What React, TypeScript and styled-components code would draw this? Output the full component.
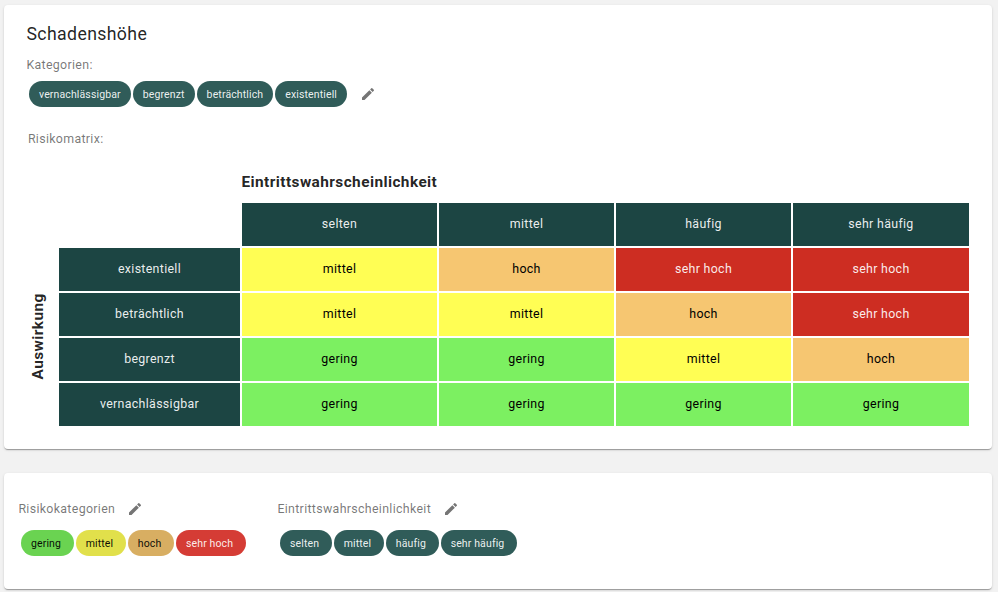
import React from "react";
import styled, { createGlobalStyle } from "styled-components";

const GlobalStyle = createGlobalStyle`
  * { box-sizing: border-box; }
  body {
    margin: 0;
    background: #f2f2f2;
    color: rgba(0, 0, 0, 0.87);
    font-family: Roboto, "Liberation Sans", sans-serif;
  }
`;

type Level = "gering" | "mittel" | "hoch" | "sehr hoch";

const cellColors: Record<Level, string> = {
  gering: "#7cf061",
  mittel: "#fffe54",
  hoch: "#f6c671",
  "sehr hoch": "#cd2d22",
};

const chipColors: Record<Level, string> = {
  gering: "#6ad351",
  mittel: "#e1e04b",
  hoch: "#d8ae62",
  "sehr hoch": "#d53c35",
};

const impacts = ["vernachlässigbar", "begrenzt", "beträchtlich", "existentiell"];
const likelihoods = ["selten", "mittel", "häufig", "sehr häufig"];
const levels: Level[] = ["gering", "mittel", "hoch", "sehr hoch"];

const matrix: { impact: string; risks: Level[] }[] = [
  { impact: "existentiell", risks: ["mittel", "hoch", "sehr hoch", "sehr hoch"] },
  { impact: "beträchtlich", risks: ["mittel", "mittel", "hoch", "sehr hoch"] },
  { impact: "begrenzt", risks: ["gering", "gering", "mittel", "hoch"] },
  { impact: "vernachlässigbar", risks: ["gering", "gering", "gering", "gering"] },
];

const Page = styled.main`
  display: flex;
  flex-direction: column;
  gap: 24px;
  width: 998px;
  height: 592px;
  padding: 5px 6px 0 4px;
  overflow: hidden;
`;

const Card = styled.section`
  border-radius: 4px;
  background: #fff;
  box-shadow: 0 2px 1px -1px rgba(0, 0, 0, 0.2), 0 1px 1px 0 rgba(0, 0, 0, 0.14),
    0 1px 3px 0 rgba(0, 0, 0, 0.12);
`;

const DamageCard = styled(Card)`
  height: 444px;
  padding: 18px 23px 0 22px;
`;

const SettingsCard = styled(Card)`
  display: flex;
  height: 116px;
  padding: 26px 14px 0;
`;

const Title = styled.h1`
  margin: 0 0 10px;
  padding-left: 0.5px;
  font-size: 17.7px;
  font-weight: 400;
  line-height: 22px;
  letter-spacing: 0.36px;
`;

const Label = styled.div`
  padding-left: 0.4px;
  color: rgba(0, 0, 0, 0.54);
  font-size: 12.4px;
  line-height: 20px;
  letter-spacing: 0.32px;
`;

const MatrixLabel = styled(Label)`
  margin: 22px 0 0 1.5px;
`;

const ChipRow = styled.div`
  display: flex;
  align-items: center;
  gap: 2px;
  padding-left: 3px;
`;

const CategoryRow = styled(ChipRow)`
  margin-top: 6px;
`;

const GroupChips = styled(ChipRow)`
  margin-top: 11px;
`;

const Chip = styled.span<{ $color?: string; $dark?: boolean; $wide?: boolean }>`
  display: inline-flex;
  align-items: center;
  height: 26px;
  padding: 1px ${(p) => (p.$wide ? 12.6 : 10)}px 0 10px;
  border-radius: 13px;
  background: ${(p) => p.$color ?? "#305c59"};
  color: ${(p) => (p.$dark ? "rgba(0, 0, 0, 0.95)" : "rgba(255, 255, 255, 0.92)")};
  font-size: 10.5px;
  line-height: 16px;
  letter-spacing: 0.13px;
  white-space: nowrap;
`;

const EditButton = styled.button<{ $gap: number }>`
  display: flex;
  margin: 0 0 0 ${(p) => p.$gap}px;
  padding: 0;
  border: 0;
  background: none;
  color: #757575;
  cursor: pointer;
`;

const MatrixLayout = styled.div`
  display: grid;
  grid-template-columns: 33px 910px;
  grid-template-rows: 20px 223px;
  row-gap: 11px;
  margin-top: 23px;
`;

const AxisTitle = styled.h2`
  margin: 0;
  font-size: 15.4px;
  font-weight: 700;
  line-height: 20px;
  letter-spacing: 0.42px;
`;

const LikelihoodTitle = styled(AxisTitle)`
  grid-column: 2;
  padding-left: 182.5px;
`;

const ImpactTitle = styled(AxisTitle)`
  justify-self: start;
  writing-mode: vertical-rl;
  transform: rotate(180deg);
  margin: 89px 0 0 2px;
  height: 87.5px;
`;

const Matrix = styled.div`
  display: grid;
  grid-template-columns: 181px 195px 175px 175px 176px;
  grid-auto-rows: 43px;
  gap: 2px;
`;

const Cell = styled.div<{ $color?: string; $light?: boolean }>`
  display: flex;
  align-items: center;
  justify-content: center;
  padding: 0 0 1px;
  background: ${(p) => p.$color ?? "transparent"};
  color: ${(p) => (p.$light ? "rgba(255, 255, 255, 0.92)" : "#000")};
  font-size: 12.4px;
  line-height: 20px;
  letter-spacing: 0.32px;
`;

const HeaderCell = styled(Cell).attrs({ $color: "#1c4543", $light: true })``;

const Group = styled.div<{ $width: number }>`
  width: ${(p) => p.$width}px;
`;

const GroupHeader = styled.div`
  display: flex;
  align-items: center;
`;

function Pencil() {
  return (
    <svg width="16" height="16" viewBox="0 0 24 24" fill="currentColor" aria-hidden="true">
      <path d="M3 17.25V21h3.75L17.81 9.94l-3.75-3.75L3 17.25zM20.71 7.04a.996.996 0 0 0 0-1.41l-2.34-2.34a.996.996 0 0 0-1.41 0l-1.83 1.83 3.75 3.75 1.83-1.83z" />
    </svg>
  );
}

function Edit({ gap }: { gap: number }) {
  return (
    <EditButton $gap={gap} aria-label="Bearbeiten">
      <Pencil />
    </EditButton>
  );
}

export default function App() {
  return (
    <>
      <GlobalStyle />
      <Page>
        <DamageCard>
          <Title>Schadenshöhe</Title>
          <Label>Kategorien:</Label>
          <CategoryRow>
            {impacts.map((name) => (
              <Chip key={name}>{name}</Chip>
            ))}
            <Edit gap={11} />
          </CategoryRow>
          <MatrixLabel>Risikomatrix:</MatrixLabel>
          <MatrixLayout>
            <LikelihoodTitle>Eintrittswahrscheinlichkeit</LikelihoodTitle>
            <ImpactTitle>Auswirkung</ImpactTitle>
            <Matrix>
              <Cell />
              {likelihoods.map((name) => (
                <HeaderCell key={name}>{name}</HeaderCell>
              ))}
              {matrix.map((row) => (
                <React.Fragment key={row.impact}>
                  <HeaderCell>{row.impact}</HeaderCell>
                  {row.risks.map((risk, i) => (
                    <Cell key={i} $color={cellColors[risk]} $light={risk === "sehr hoch"}>
                      {risk}
                    </Cell>
                  ))}
                </React.Fragment>
              ))}
            </Matrix>
          </MatrixLayout>
        </DamageCard>
        <SettingsCard>
          <Group $width={259}>
            <GroupHeader>
              <Label>Risikokategorien</Label>
              <Edit gap={12} />
            </GroupHeader>
            <GroupChips>
              {levels.map((name) => (
                <Chip key={name} $wide $color={chipColors[name]} $dark={name !== "sehr hoch"}>
                  {name}
                </Chip>
              ))}
            </GroupChips>
          </Group>
          <Group $width={300}>
            <GroupHeader>
              <Label>Eintrittswahrscheinlichkeit</Label>
              <Edit gap={12} />
            </GroupHeader>
            <GroupChips>
              {likelihoods.map((name) => (
                <Chip key={name} $wide>
                  {name}
                </Chip>
              ))}
            </GroupChips>
          </Group>
        </SettingsCard>
      </Page>
    </>
  );
}
